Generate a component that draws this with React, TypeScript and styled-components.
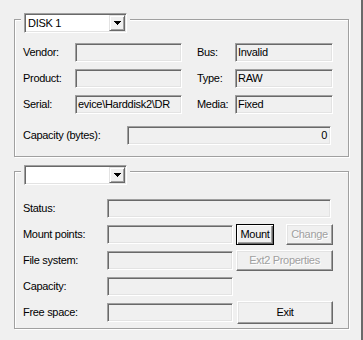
import React from "react";
import styled, { createGlobalStyle } from "styled-components";

const Global = createGlobalStyle`
  html, body { margin: 0; padding: 0; background: #f0f0f0; }
  body {
    font-family: "Liberation Sans", Arial, sans-serif;
    font-size: 11px;
    letter-spacing: -0.3px;
    color: #000;
  }
`;

const Window = styled.div`
  box-sizing: border-box;
  width: 363px;
  height: 340px;
  border-right: 2px solid #696969;
  padding: 19px 0 0 14px;
  display: flex;
  flex-direction: column;
  gap: 14px;
  background: #f0f0f0;
`;

const Group = styled.div<{ $h: number }>`
  box-sizing: border-box;
  width: 335px;
  height: ${(p) => p.$h}px;
  border: 1px solid #a0a0a0;
  box-shadow: inset 1px 1px 0 #fff, 1px 1px 0 #fff;
  display: flex;
  flex-direction: column;
  align-items: flex-start;
`;

const Legend = styled.div`
  margin: -7px 0 0 6px;
  padding: 0 3px;
  background: #f0f0f0;
  display: flex;
`;

const Combo = styled.div`
  box-sizing: border-box;
  width: 103px;
  height: 20px;
  border: 1px solid;
  border-color: #a0a0a0 #fff #fff #a0a0a0;
  box-shadow: inset 1px 1px 0 #696969, inset -1px -1px 0 #e3e3e3;
  background: #fff;
  padding: 1px;
  display: flex;
  align-items: stretch;
`;

const ComboText = styled.div`
  flex: 1;
  padding-left: 2px;
  line-height: 16px;
  white-space: nowrap;
  overflow: hidden;
`;

const DropButton = styled.div`
  box-sizing: border-box;
  width: 16px;
  height: 16px;
  border: 1px solid;
  border-color: #e3e3e3 #696969 #696969 #e3e3e3;
  box-shadow: inset 1px 1px 0 #fff, inset -1px -1px 0 #a0a0a0;
  background: #f0f0f0;
  display: flex;
  align-items: center;
  justify-content: center;
`;

const InfoGrid = styled.div`
  display: grid;
  grid-template-columns: 52px 107px 53px 98px;
  grid-auto-rows: 26px;
  align-items: center;
  margin: 6px 0 0 8px;
`;

const Label = styled.div<{ $indent?: number }>`
  padding-left: ${(p) => p.$indent ?? 0}px;
  white-space: nowrap;
  line-height: 14px;
`;

const Field = styled.div<{ $w: number; $right?: boolean }>`
  box-sizing: border-box;
  width: ${(p) => p.$w}px;
  height: 19px;
  border: 1px solid;
  border-color: #a0a0a0 #fff #fff #a0a0a0;
  box-shadow: inset 1px 1px 0 #696969, inset -1px -1px 0 #e3e3e3;
  background: #f0f0f0;
  padding: 0 3px 0 2px;
  line-height: 17px;
  white-space: nowrap;
  overflow: hidden;
  text-align: ${(p) => (p.$right ? "right" : "left")};
`;

const CapacityRow = styled.div`
  display: flex;
  align-items: center;
  height: 26px;
  margin: 5px 0 0 8px;
`;

const CapLabel = styled(Label)`
  width: 104px;
`;

const MountGrid = styled.div`
  display: grid;
  grid-template-columns: 84px 126px 100px;
  grid-auto-rows: 26px;
  align-items: center;
  margin: 10px 0 0 8px;
`;

const Wide = styled.div`
  grid-column: 2 / 4;
`;

const ButtonCell = styled.div<{ $end?: boolean }>`
  display: flex;
  justify-content: ${(p) => (p.$end ? "flex-end" : "space-between")};
  width: 97px;
  margin-left: 3px;
`;

const Button = styled.button<{ $w: number; $h: number; $default?: boolean }>`
  box-sizing: border-box;
  width: ${(p) => p.$w}px;
  height: ${(p) => p.$h}px;
  padding: 0;
  margin: 0;
  font: inherit;
  letter-spacing: inherit;
  color: #000;
  background: #f0f0f0;
  border: 1px solid;
  border-color: ${(p) => (p.$default ? "#000" : "#fff #696969 #696969 #fff")};
  box-shadow: ${(p) =>
    p.$default
      ? "inset 1px 1px 0 #fff, inset -1px -1px 0 #696969, inset -2px -2px 0 #a0a0a0"
      : "inset -1px -1px 0 #a0a0a0, inset 1px 1px 0 #e3e3e3"};
  &:disabled {
    color: #a0a0a0;
    text-shadow: 1px 1px 0 #fff;
  }
`;

const Arrow = () => (
  <svg width="7" height="4" viewBox="0 0 7 4" shapeRendering="crispEdges">
    <path d="M0 0h7v1H0z M1 1h5v1H1z M2 2h3v1H2z M3 3h1v1H3z" fill="#000" />
  </svg>
);

const ComboBox = ({ value }: { value: string }) => (
  <Combo>
    <ComboText>{value}</ComboText>
    <DropButton>
      <Arrow />
    </DropButton>
  </Combo>
);

export default function App() {
  return (
    <>
      <Global />
      <Window>
        <Group $h={138}>
          <Legend>
            <ComboBox value="DISK 1" />
          </Legend>
          <InfoGrid>
            <Label>Vendor:</Label>
            <Field $w={107} />
            <Label $indent={15}>Bus:</Label>
            <Field $w={98}>Invalid</Field>

            <Label>Product:</Label>
            <Field $w={107} />
            <Label $indent={15}>Type:</Label>
            <Field $w={98}>RAW</Field>

            <Label>Serial:</Label>
            <Field $w={107}>evice\Harddisk2\DR</Field>
            <Label $indent={15}>Media:</Label>
            <Field $w={98}>Fixed</Field>
          </InfoGrid>
          <CapacityRow>
            <CapLabel>Capacity (bytes):</CapLabel>
            <Field $w={204} $right>
              0
            </Field>
          </CapacityRow>
        </Group>

        <Group $h={158}>
          <Legend>
            <ComboBox value="" />
          </Legend>
          <MountGrid>
            <Label>Status:</Label>
            <Wide>
              <Field $w={224} />
            </Wide>

            <Label>Mount points:</Label>
            <Field $w={126} />
            <ButtonCell>
              <Button $w={38} $h={21} $default>
                Mount
              </Button>
              <Button $w={47} $h={21} disabled>
                Change
              </Button>
            </ButtonCell>

            <Label>File system:</Label>
            <Field $w={126} />
            <ButtonCell>
              <Button $w={97} $h={21} disabled>
                Ext2 Properties
              </Button>
            </ButtonCell>

            <Label>Capacity:</Label>
            <Field $w={126} />
            <div />

            <Label>Free space:</Label>
            <Field $w={126} />
            <ButtonCell $end>
              <Button $w={96} $h={23}>
                Exit
              </Button>
            </ButtonCell>
          </MountGrid>
        </Group>
      </Window>
    </>
  );
}
